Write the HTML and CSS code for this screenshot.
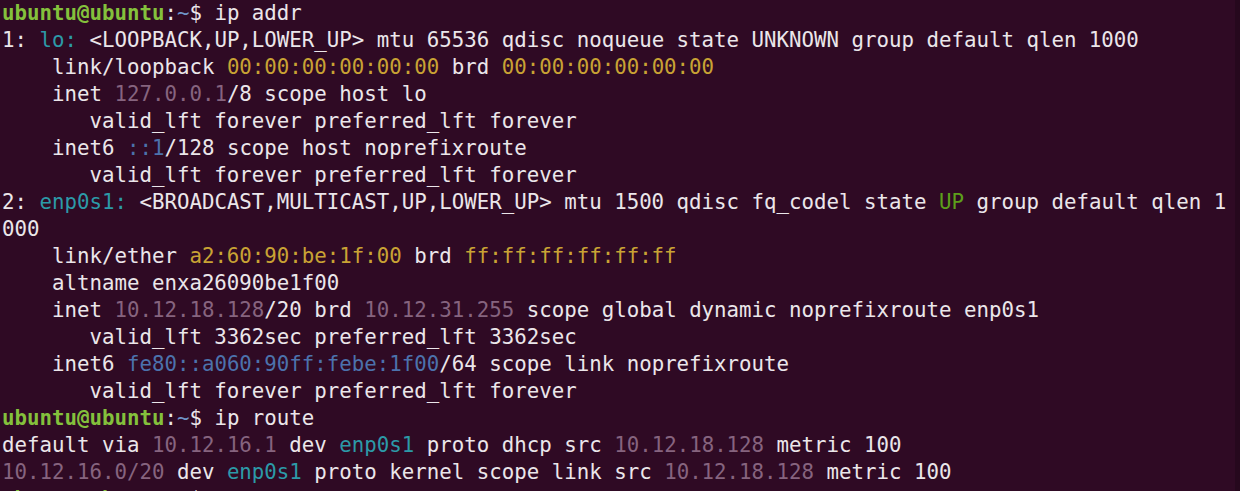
FILE: index.html
```html
<!DOCTYPE html>
<html lang="en">
<head>
    <meta charset="UTF-8">
    <meta name="viewport" content="width=device-width, initial-scale=1.0">
    <title>ubuntu@ubuntu: ~</title>
    <link rel="stylesheet" href="styles.css">
</head>
<body>

    <div class="terminal">
        <div class="line"><span class="user">ubuntu@ubuntu</span>:<span class="path">~</span>$ ip addr</div>
        <div class="line">1: <span class="iface">lo:</span> &lt;LOOPBACK,UP,LOWER_UP&gt; mtu 65536 qdisc noqueue state UNKNOWN group default qlen 1000</div>
        <div class="line">    link/loopback <span class="mac">00:00:00:00:00:00</span> brd <span class="mac">00:00:00:00:00:00</span></div>
        <div class="line">    inet <span class="ip4">127.0.0.1</span>/8 scope host lo</div>
        <div class="line">       valid_lft forever preferred_lft forever</div>
        <div class="line">    inet6 <span class="ip6">::1</span>/128 scope host noprefixroute</div>
        <div class="line">       valid_lft forever preferred_lft forever</div>
        <div class="line">2: <span class="iface">enp0s1:</span> &lt;BROADCAST,MULTICAST,UP,LOWER_UP&gt; mtu 1500 qdisc fq_codel state <span class="up">UP</span> group default qlen 1</div>
        <div class="line">000</div>
        <div class="line">    link/ether <span class="mac">a2:60:90:be:1f:00</span> brd <span class="mac">ff:ff:ff:ff:ff:ff</span></div>
        <div class="line">    altname enxa26090be1f00</div>
        <div class="line">    inet <span class="ip4">10.12.18.128</span>/20 brd <span class="ip4">10.12.31.255</span> scope global dynamic noprefixroute enp0s1</div>
        <div class="line">       valid_lft 3362sec preferred_lft 3362sec</div>
        <div class="line">    inet6 <span class="ip6">fe80::a060:90ff:febe:1f00</span>/64 scope link noprefixroute</div>
        <div class="line">       valid_lft forever preferred_lft forever</div>
        <div class="line"><span class="user">ubuntu@ubuntu</span>:<span class="path">~</span>$ ip route</div>
        <div class="line">default via <span class="ip4">10.12.16.1</span> dev <span class="iface">enp0s1</span> proto dhcp src <span class="ip4">10.12.18.128</span> metric 100</div>
        <div class="line"><span class="ip4">10.12.16.0/20</span> dev <span class="iface">enp0s1</span> proto kernel scope link src <span class="ip4">10.12.18.128</span> metric 100</div>
        <div class="line"><span class="user">ubuntu@ubuntu</span>:<span class="path">~</span>$ </div>
    </div>

</body>
</html>
```

FILE: styles.css
```css
:root {
    --bg: #2f0a24;
    --edge: #26081d;
    --fg: #ebe6ea;
    --green: #84c13c;
    --green-dark: #5d9f1a;
    --blue: #6f95c9;
    --cyan: #2c9aa8;
    --purple: #86647f;
    --yellow: #c9a334;
    --ip6: #4c72ac;
}

html,
body {
    margin: 0;
    height: 100%;
    background-color: var(--bg);
    overflow: hidden;
}

.terminal {
    height: 100%;
    box-sizing: border-box;
    padding: 0 0 0 2px;
    border-right: 5px solid var(--edge);
    font-family: "DejaVu Sans Mono", "Liberation Mono", monospace;
    font-size: 20.75px;
    line-height: 27px;
    color: var(--fg);
}

.line {
    white-space: pre;
    height: 27px;
}

.user {
    color: var(--green);
    font-weight: bold;
}

.path {
    color: var(--blue);
}

.iface {
    color: var(--cyan);
}

.ip4 {
    color: var(--purple);
}

.ip6 {
    color: var(--ip6);
}

.mac {
    color: var(--yellow);
}

.up {
    color: var(--green-dark);
}
```
